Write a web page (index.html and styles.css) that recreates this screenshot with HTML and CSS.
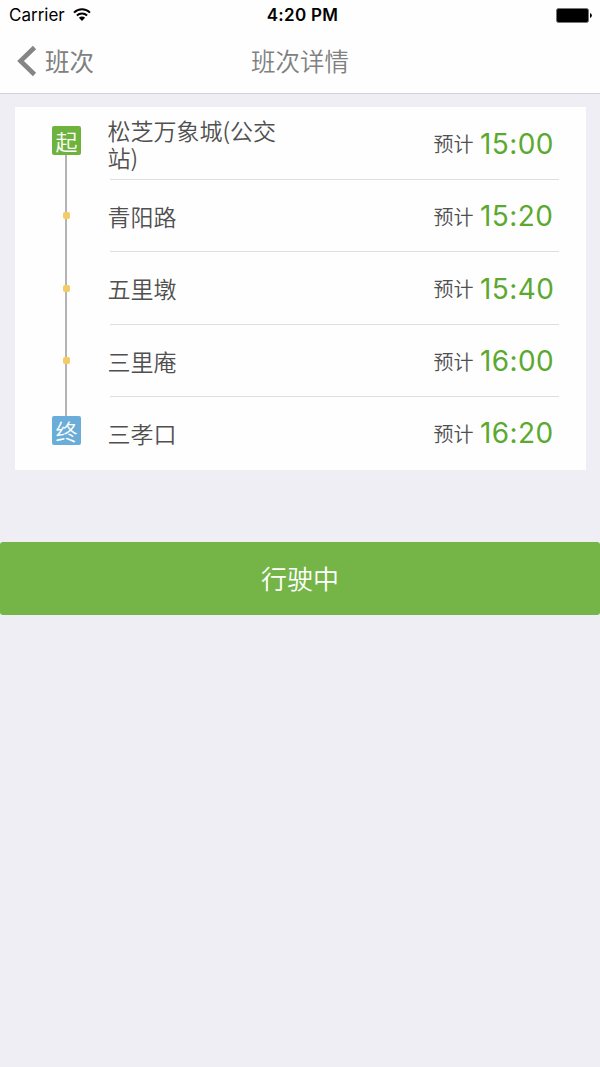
FILE: index.html
```html
<!DOCTYPE html>
<html lang="zh-CN">
  <head>
    <meta charset="UTF-8" />
    <title>班次详情</title>
    <link rel="stylesheet" href="styles.css">
  </head>
  <body>

    <header class="header">
      <div class="status-bar">
        <div class="carrier">
          <span>Carrier</span>
          <svg class="wifi" viewBox="0 0 18 13" width="18" height="13">
            <path d="M1 4.6a11.4 11.4 0 0 1 16 0M3.9 7.5a7.2 7.2 0 0 1 10.2 0" fill="none" stroke="#000" stroke-width="2"/>
            <path d="M9 13L5.9 9.8a4.4 4.4 0 0 1 6.2 0z"/>
          </svg>
        </div>
        <span class="clock">4:20 PM</span>
        <svg class="battery" viewBox="0 0 37 15" width="37" height="15">
          <rect x=".5" y=".5" width="32" height="14" rx="2" fill="#000" stroke="#777"/>
          <path d="M34 5a2.6 2.6 0 0 1 0 5z"/>
        </svg>
      </div>
      <nav class="nav-bar">
        <a class="back">
          <svg viewBox="0 0 20 32" width="20" height="32">
            <path d="M17.5 2.5L3.5 16l14 13.5" fill="none" stroke="#858585" stroke-width="4.6"/>
          </svg>
          <span>班次</span>
        </a>
        <h1 class="title">班次详情</h1>
        <span></span>
      </nav>
    </header>

    <main>
      <ul class="stops">
        <li class="stop">
          <div class="rail"><span class="badge start">起</span></div>
          <div class="stop-info">
            <span class="name">松芝万象城(公交站)</span>
            <span class="label">预计</span>
            <span class="time">15:00</span>
          </div>
        </li>
        <li class="stop">
          <div class="rail"><span class="dot"></span></div>
          <div class="stop-info">
            <span class="name">青阳路</span>
            <span class="label">预计</span>
            <span class="time">15:20</span>
          </div>
        </li>
        <li class="stop">
          <div class="rail"><span class="dot"></span></div>
          <div class="stop-info">
            <span class="name">五里墩</span>
            <span class="label">预计</span>
            <span class="time">15:40</span>
          </div>
        </li>
        <li class="stop">
          <div class="rail"><span class="dot"></span></div>
          <div class="stop-info">
            <span class="name">三里庵</span>
            <span class="label">预计</span>
            <span class="time">16:00</span>
          </div>
        </li>
        <li class="stop">
          <div class="rail"><span class="badge end">终</span></div>
          <div class="stop-info">
            <span class="name">三孝口</span>
            <span class="label">预计</span>
            <span class="time">16:20</span>
          </div>
        </li>
      </ul>

      <button class="status-btn">行驶中</button>
    </main>

  </body>
</html>
```
FILE: styles.css
```css
* {
  box-sizing: border-box;
}

body {
  margin: 0;
  min-height: 100vh;
  background: #efeef4;
  color: #505050;
  font-family: Inter, "Noto Sans CJK SC", sans-serif;
}

.header {
  height: 94px;
  background: #fefefe;
  border-bottom: 1px solid #d3d2d8;
}

.status-bar {
  display: grid;
  grid-template-columns: 1fr auto 1fr;
  align-items: center;
  height: 30px;
  padding: 0 7px 0 9px;
  color: #000;
  font-size: 17px;
  line-height: 30px;
}

.carrier {
  display: flex;
  align-items: center;
  gap: 8px;
}

.wifi {
  margin-bottom: 2px;
}

.clock {
  padding-left: 3px;
  font-weight: 600;
  letter-spacing: 0.3px;
}

.battery {
  justify-self: end;
}

.nav-bar {
  display: grid;
  grid-template-columns: 1fr auto 1fr;
  align-items: center;
  height: 60px;
  padding: 0 17px;
  color: #808080;
  font-family: "Noto Sans CJK SC", sans-serif;
}

.back {
  display: flex;
  align-items: center;
  gap: 8px;
  font-size: 24.5px;
  font-weight: 400;
}

.back svg {
  margin-top: 2px;
}

.title {
  margin: 0;
  font-size: 24.5px;
  font-weight: 350;
}

.stops {
  margin: 13px 14.5px 0;
  padding: 0;
  background: #fefefe;
  list-style: none;
}

.stop {
  display: flex;
  height: 72.5px;
}

/* vertical line that joins the stops */
.rail {
  display: flex;
  align-items: center;
  justify-content: center;
  width: 29px;
  margin-left: 37.5px;
  background: linear-gradient(#b4b4b4, #b4b4b4) 13px 0 / 2px 100% no-repeat;
}

.stop:first-child .rail {
  background-position: 13px 36px;
  background-size: 2px 38px;
}

.stop:last-child .rail {
  background-size: 2px 50%;
}

.badge {
  width: 29px;
  height: 29px;
  margin-bottom: 5px;
  border-radius: 2px;
  color: #fff;
  font-family: "Noto Sans CJK SC", sans-serif;
  font-size: 22px;
  font-weight: 350;
  line-height: 28px;
  text-align: center;
}

.start {
  background: #6fb33f;
}

.end {
  background: #69add8;
}

.dot {
  width: 7px;
  height: 7px;
  margin-right: 1px;
  border-radius: 2px;
  background: #f4cc66;
}

.stop-info {
  display: flex;
  flex: 1;
  align-items: center;
  margin-left: 29px;
  margin-right: 26.5px;
  padding-top: 2px;
  padding-right: 6px;
  border-bottom: 1px solid #dedede;
}

.stop:last-child .stop-info {
  padding-top: 0;
  border-bottom: none;
}

.name {
  width: 180px;
  margin-left: -2.5px;
  margin-right: auto;
  font-family: "Noto Sans CJK SC", sans-serif;
  font-size: 23px;
  font-weight: 350;
  line-height: 27px;
}

.label {
  font-family: "Noto Sans CJK SC", sans-serif;
  font-size: 20px;
  font-weight: 350;
}

.time {
  width: 73px;
  margin-left: 6.5px;
  color: #5ba930;
  font-size: 28px;
  letter-spacing: 0.4px;
}

.status-btn {
  display: block;
  width: 100%;
  height: 72.5px;
  margin-top: 72.5px;
  padding: 0 0 2px;
  border: none;
  border-radius: 3px;
  background: #75b548;
  color: #fff;
  font-family: "Noto Sans CJK SC", sans-serif;
  font-size: 26px;
  font-weight: 350;
}
```
